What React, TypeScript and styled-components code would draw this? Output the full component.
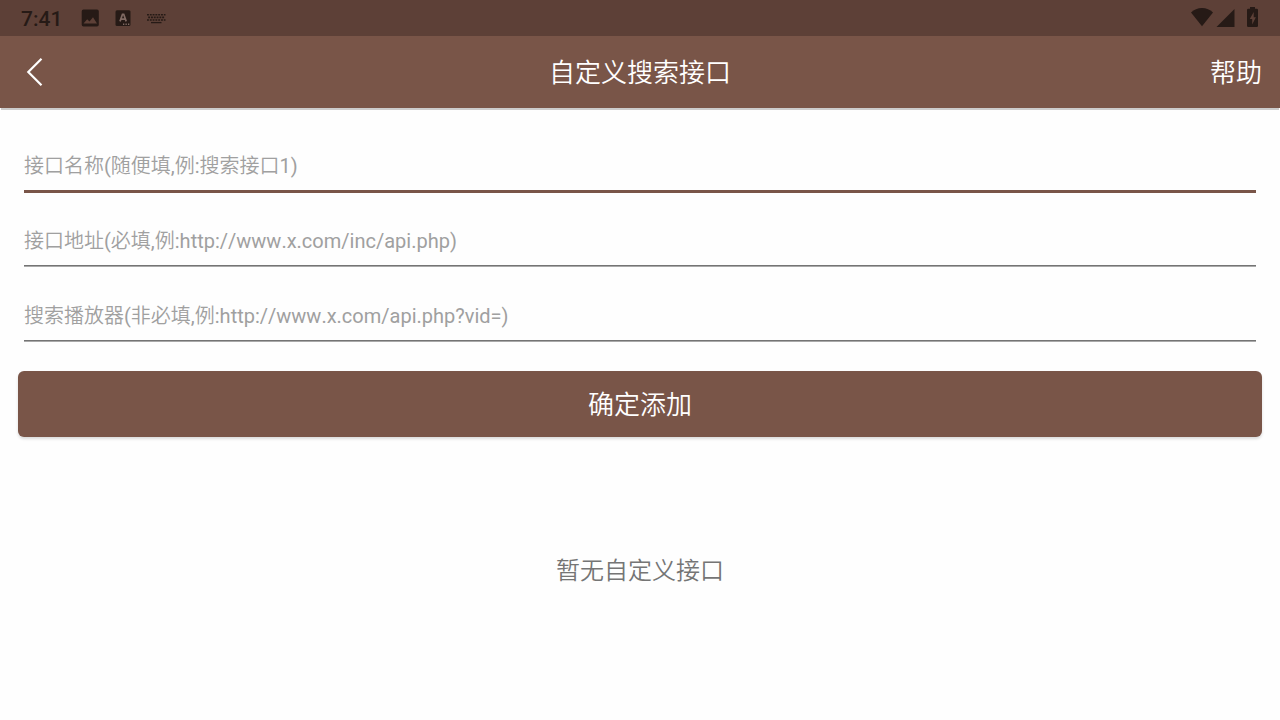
import React from "react";
import styled, { createGlobalStyle } from "styled-components";

const GlobalStyle = createGlobalStyle`
  *, *::before, *::after { box-sizing: border-box; }
  body {
    margin: 0;
    background: #fefefe;
    font-family: Roboto, "Noto Sans CJK SC DemiLight", "Noto Sans CJK SC", sans-serif;
  }
  button, input { font-family: inherit; }
`;

const Page = styled.div`
  display: flex;
  flex-direction: column;
  min-height: 100vh;
`;

const StatusBar = styled.div`
  display: flex;
  align-items: center;
  justify-content: space-between;
  height: 36px;
  padding: 0 21px;
  background: #5d4037;
  color: #261a16;
`;

const StatusGroup = styled.div`
  display: flex;
  align-items: center;
`;

const Clock = styled.time`
  margin-right: 18px;
  padding-top: 2px;
  font-size: 21px;
  line-height: 34px;
  font-weight: 500;
`;

const StatusIcon = styled.svg<{ $gap?: number }>`
  display: block;
  flex: none;
  margin-left: ${(p) => p.$gap ?? 0}px;
  fill: currentColor;
`;

const Header = styled.header`
  display: grid;
  grid-template-columns: 1fr auto 1fr;
  align-items: center;
  height: 72px;
  padding: 0 18px;
  background: #795548;
  color: #fff;
  box-shadow: 0 3px 0 -1px #ccc;
`;

const Title = styled.h1`
  margin: 0;
  padding-top: 2px;
  font-size: 26px;
  line-height: 36px;
  font-weight: 400;
`;

const HeaderButton = styled.button<{ $end?: boolean }>`
  justify-self: ${(p) => (p.$end ? "end" : "start")};
  display: flex;
  align-items: center;
  height: 72px;
  padding: ${(p) => (p.$end ? "2px 0 0" : "0")};
  border: 0;
  background: none;
  color: #fff;
  font-size: 26px;
  line-height: 36px;
  cursor: pointer;
`;

const Form = styled.form`
  display: flex;
  flex-direction: column;
  padding: 32px 18px 0;
`;

const Field = styled.label`
  display: block;
  height: 75px;
  padding: 0 6px;
`;

const TextInput = styled.input<{ $active?: boolean }>`
  display: block;
  width: 100%;
  height: ${(p) => (p.$active ? 53 : 51)}px;
  padding: 2px 0 0;
  border: 0;
  border-bottom: ${(p) => (p.$active ? "3px solid #795548" : "1px solid #747474")};
  box-shadow: ${(p) => (p.$active ? "none" : "0 1px 0 #a9a9a9")};
  border-radius: 0;
  outline: 0;
  background: transparent;
  color: #212121;
  font-size: 20px;
  line-height: 30px;
  font-kerning: none;
  &::placeholder {
    color: #a0a0a0;
    opacity: 1;
  }
`;

const SubmitButton = styled.button`
  height: 66px;
  margin-top: 6px;
  padding: 2px 0 0;
  border: 0;
  border-radius: 6px;
  background: #795548;
  color: #fff;
  font-size: 26px;
  line-height: 36px;
  box-shadow: 0 2px 3px rgba(0, 0, 0, 0.14);
  cursor: pointer;
`;

const EmptyText = styled.p`
  margin: 116px 0 0;
  text-align: center;
  color: #757575;
  font-size: 24px;
  line-height: 36px;
`;

const fields = [
  { name: "name", hint: "接口名称(随便填,例:搜索接口1)", active: true },
  { name: "url", hint: "接口地址(必填,例:http://www.x.com/inc/api.php)" },
  { name: "player", hint: "搜索播放器(非必填,例:http://www.x.com/api.php?vid=)" },
];

const ImageIcon = () => (
  <StatusIcon width="20" height="20" viewBox="0 0 20 20" aria-hidden="true">
    <path
      fillRule="evenodd"
      d="M3.500 1.500h13.500a1.800 1.800 0 0 1 1.800 1.800v13.500a1.800 1.800 0 0 1-1.800 1.800h-13.500a1.800 1.800 0 0 1-1.800-1.800v-13.500A1.800 1.800 0 0 1 3.500 1.500zM3.500 15.500h13.500l-4-6.300-3.500 4.400-2.300-2.400z"
    />
  </StatusIcon>
);

const LetterIcon = () => (
  <StatusIcon width="16" height="16" viewBox="0 0 16 16" $gap={15} aria-hidden="true">
    <rect x="0.500" y="0.300" width="15" height="15.700" rx="1.500" />
    <path
      d="M5 11.400 7.500 4.300h1.200l2.500 7.100M6 9.200h4.200"
      fill="none"
      stroke="#806a63"
      strokeWidth="1.700"
    />
    <path d="M8 13.600h1.300v1.300H8zM10.500 13.600h1.300v1.300h-1.300zM13 13.600h1.300v1.300H13z" fill="#806a63" />
  </StatusIcon>
);

const KeyboardIcon = () => (
  <StatusIcon width="20" height="20" viewBox="0 0 20 20" $gap={15} aria-hidden="true">
    <g fill="none" stroke="currentColor">
      <path d="M1 6.800h18.500M2.200 9.400h16M1 12h18.500" strokeWidth="1.600" strokeDasharray="1.900 0.900" />
      <path d="M5 14.600h10.500" strokeWidth="1.300" />
    </g>
  </StatusIcon>
);

const WifiIcon = () => (
  <StatusIcon width="24" height="20" viewBox="0 0 24 20" aria-hidden="true">
    <path d="M12 18.300 1 4.500Q5.500 0 12 0t11 4.500z" />
  </StatusIcon>
);

const SignalIcon = () => (
  <StatusIcon width="20" height="20" viewBox="0 0 20 20" $gap={2} aria-hidden="true">
    <path d="M0.500 19 18.500 1v18z" />
  </StatusIcon>
);

const BatteryIcon = () => (
  <StatusIcon width="14" height="22" viewBox="0 0 14 22" $gap={9} aria-hidden="true">
    <path
      fillRule="evenodd"
      d="M5 0h5v1.800h1.800a1.200 1.200 0 0 1 1.200 1.200v15.800a1.200 1.200 0 0 1-1.200 1.200h-8.600a1.200 1.200 0 0 1-1.200-1.200V3A1.200 1.200 0 0 1 3.200 1.800H5zM8.700 5l-3.900 7h2.400v5.500l3.700-7.300H8.700z"
    />
  </StatusIcon>
);

export default function App() {
  return (
    <Page>
      <GlobalStyle />
      <StatusBar>
        <StatusGroup>
          <Clock>7:41</Clock>
          <ImageIcon />
          <LetterIcon />
          <KeyboardIcon />
        </StatusGroup>
        <StatusGroup>
          <WifiIcon />
          <SignalIcon />
          <BatteryIcon />
        </StatusGroup>
      </StatusBar>
      <Header>
        <HeaderButton type="button" aria-label="返回">
          <svg width="32" height="32" viewBox="0 0 32 32" aria-hidden="true">
            <path
              d="M23.500 2.800 10.300 16l13.200 13.200"
              fill="none"
              stroke="currentColor"
              strokeWidth="2.200"
            />
          </svg>
        </HeaderButton>
        <Title>自定义搜索接口</Title>
        <HeaderButton type="button" $end>
          帮助
        </HeaderButton>
      </Header>
      <main>
        <Form onSubmit={(e) => e.preventDefault()}>
          {fields.map((f) => (
            <Field key={f.name}>
              <TextInput
                type="text"
                name={f.name}
                placeholder={f.hint}
                aria-label={f.hint}
                $active={f.active}
              />
            </Field>
          ))}
          <SubmitButton type="submit">确定添加</SubmitButton>
        </Form>
        <EmptyText>暂无自定义接口</EmptyText>
      </main>
    </Page>
  );
}
